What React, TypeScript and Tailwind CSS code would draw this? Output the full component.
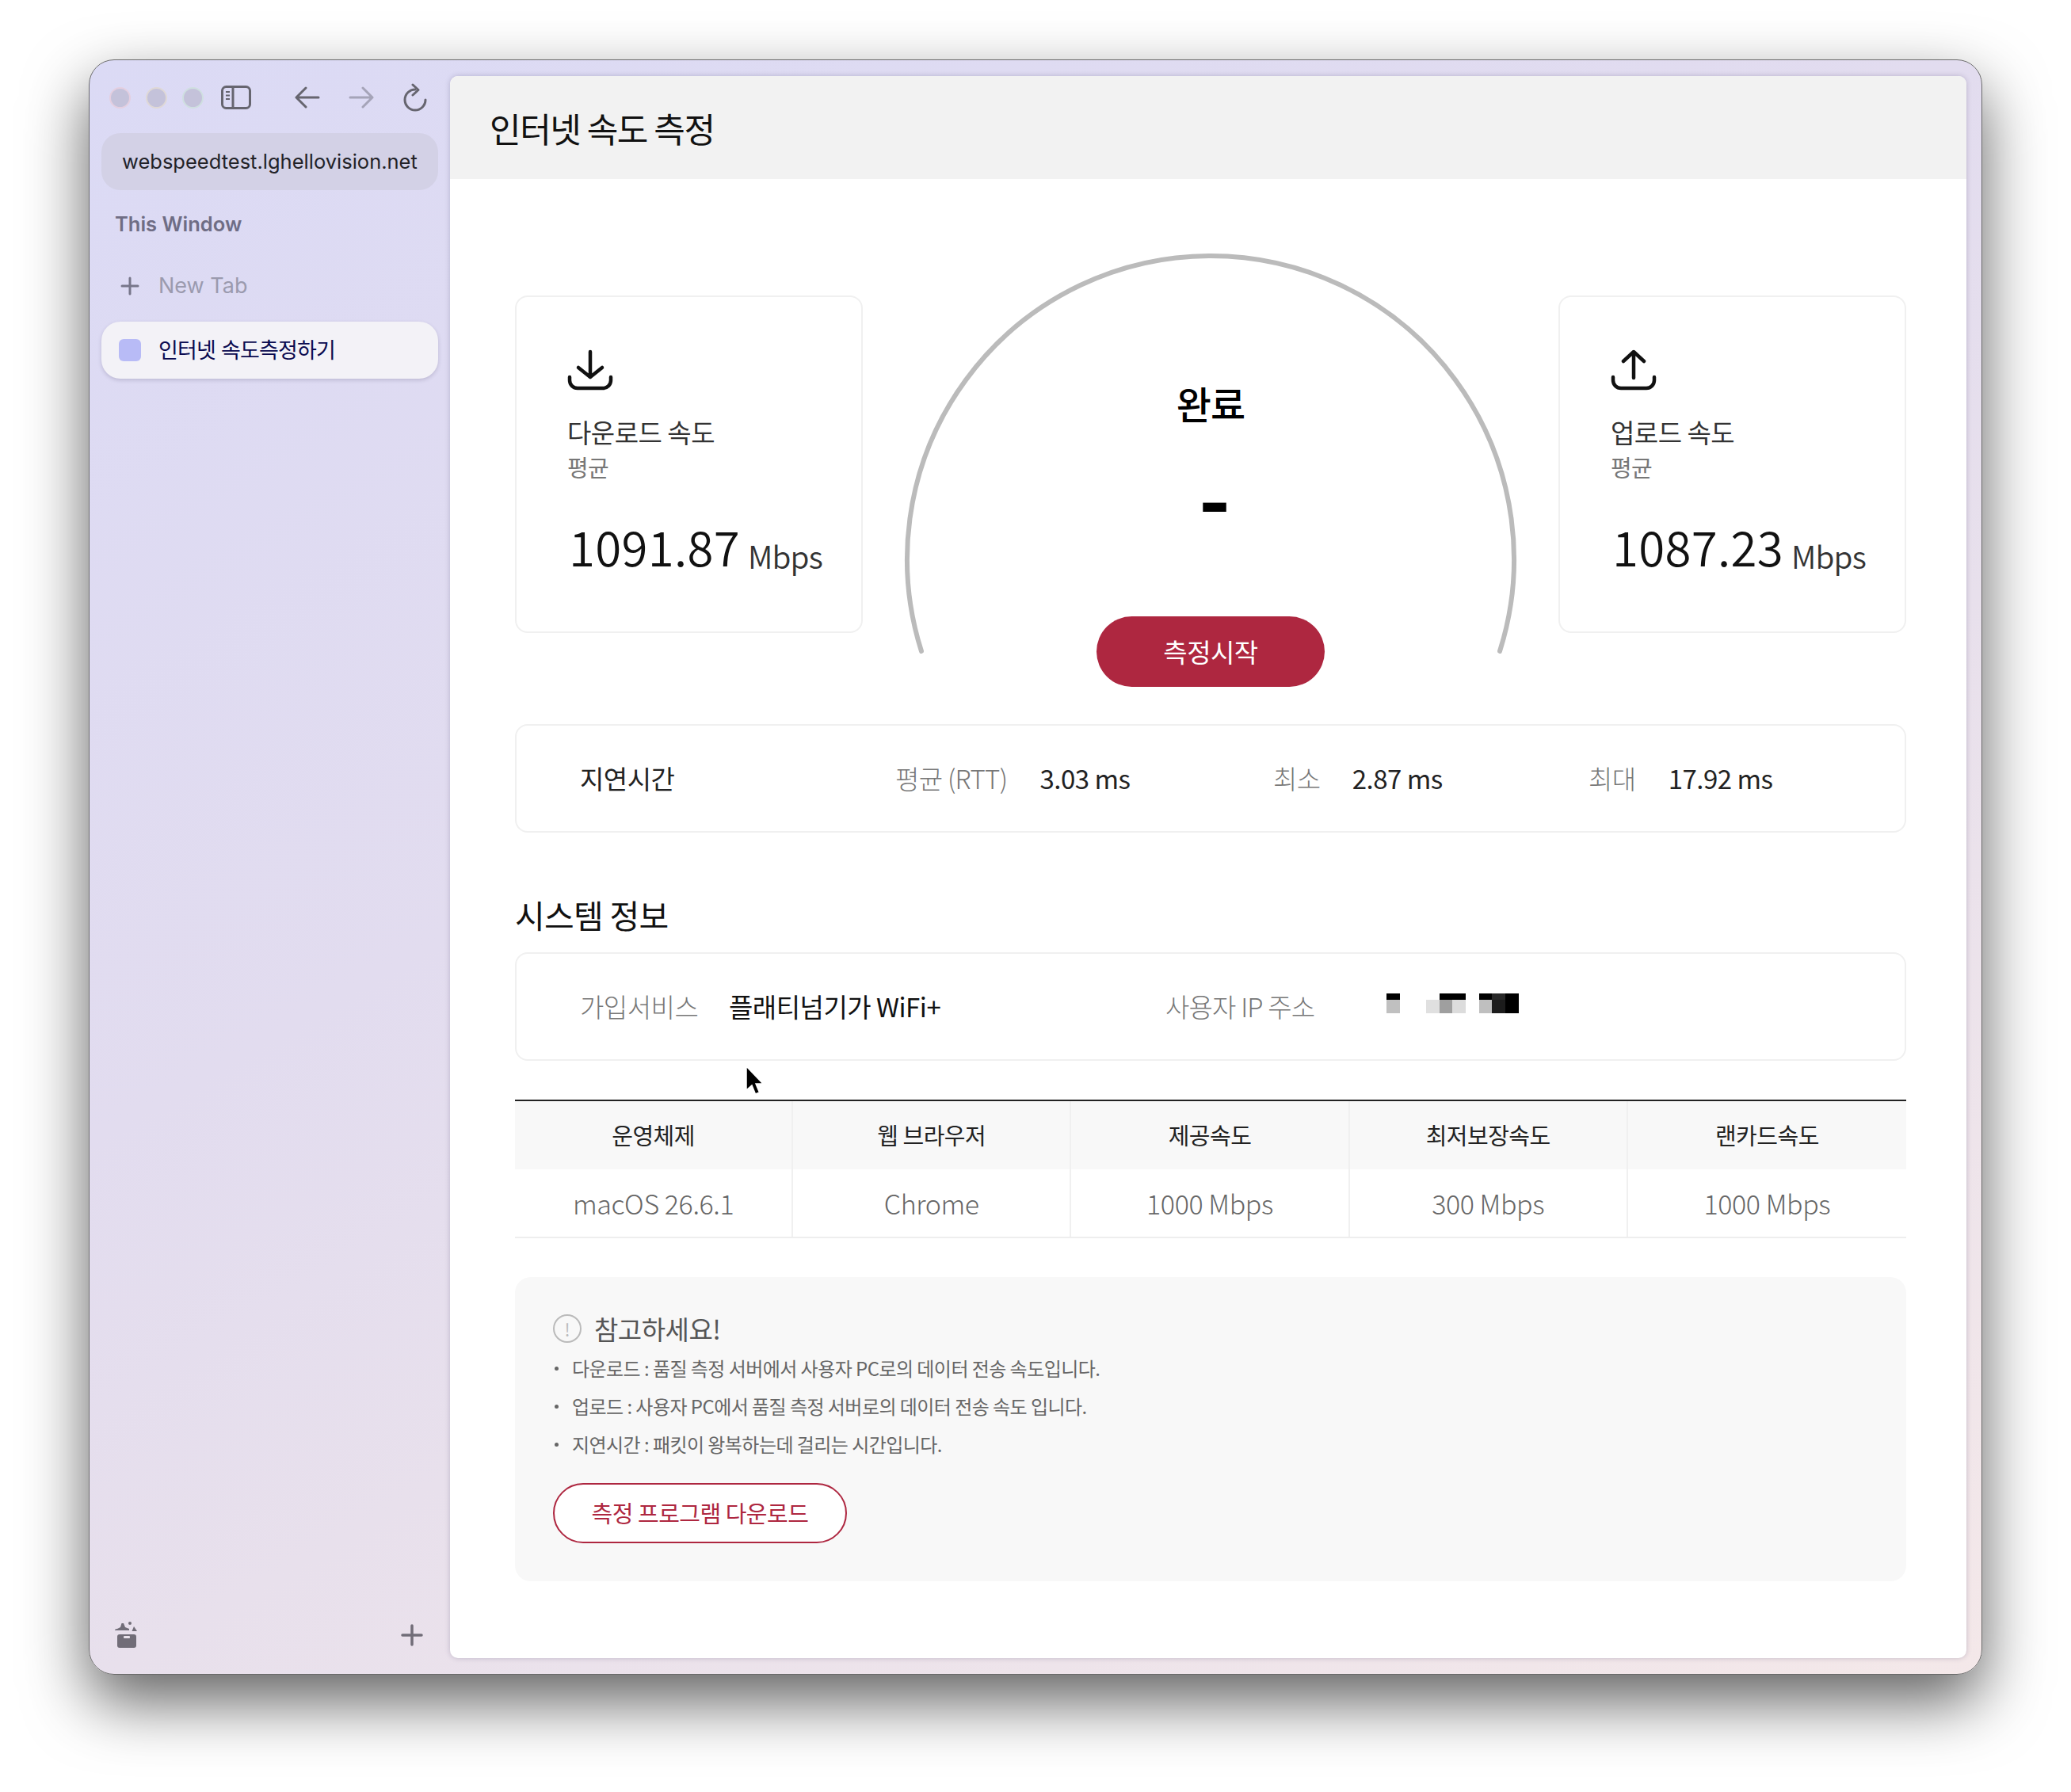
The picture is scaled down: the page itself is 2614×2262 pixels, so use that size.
const kr = "font-['Noto_Sans_CJK_KR',sans-serif]";

function DownloadIcon() {
  return (
    <svg width="58" height="54" viewBox="0 0 58 54" fill="none" stroke="#111" strokeWidth="4.5" strokeLinecap="round" strokeLinejoin="round">
      <path d="M29 3v32M14 23l15 12 15-12" />
      <path d="M3 35v4a10 10 0 0 0 10 10h32a10 10 0 0 0 10-10v-4" />
    </svg>
  );
}

function UploadIcon() {
  return (
    <svg width="58" height="54" viewBox="0 0 58 54" fill="none" stroke="#111" strokeWidth="4.5" strokeLinecap="round" strokeLinejoin="round">
      <path d="M29 36V4M16 15L29 3l13 12" />
      <path d="M3 35v4a10 10 0 0 0 10 10h32a10 10 0 0 0 10-10v-4" />
    </svg>
  );
}

function SpeedCard({ icon, title, value }: { icon: React.ReactNode; title: string; value: string }) {
  return (
    <div className="mt-[55px] h-[426px] w-[439px] rounded-[16px] border-2 border-[#f0f0f0] pl-[64px] pt-[66px]">
      <div className="h-[54px]">{icon}</div>
      <p className="mt-[27px] text-[33px] leading-[46px] tracking-[-0.5px] text-[#333]">{title}</p>
      <p className="mt-[3px] text-[29px] leading-[36px] tracking-[-0.8px] text-[#777]">평균</p>
      <p className="mt-[46px] flex items-end whitespace-nowrap pl-[2px]">
        <span className="text-[60px] font-[350] leading-[72px] tracking-[0.3px] text-[#111]">{value}</span>
        <span className="ml-[10px] text-[39px] font-[350] leading-[48px] tracking-[-0.8px] text-[#333]">Mbps</span>
      </p>
    </div>
  );
}

function Gauge() {
  return (
    <div className="relative flex h-[549px] w-[774px] flex-col items-center">
      <svg className="absolute inset-0" width="774" height="549" viewBox="0 0 774 549" fill="none">
        <path d="M22 504A383 383 0 1 1 752 504" stroke="#bbbbbb" strokeWidth="6" strokeLinecap="round" />
      </svg>
      <p className="mt-[158px] text-[48px] font-medium leading-[64px] tracking-[-1px] text-black">완료</p>
      <p className="ml-[10px] mt-[36px] h-[96px] text-[108px] font-bold leading-[96px] text-black">-</p>
      <button className="relative mt-[106px] flex h-[90px] w-[288px] items-center justify-center rounded-full bg-[#ae2740] text-[33px] tracking-[-0.5px] text-white">
        측정시작
      </button>
    </div>
  );
}

function LatencyRow() {
  return (
    <div className="mt-[47px] flex h-[137px] items-center rounded-[16px] border-2 border-[#f0f0f0] pl-[80px] text-[33px] tracking-[-0.5px]">
      <span className="w-[398px] text-[#222]">지연시간</span>
      <div className="flex w-[477px] gap-[41px]">
        <span className="font-light tracking-[-0.7px] text-[#777]">평균 (RTT)</span>
        <span className="text-[#222]">3.03 ms</span>
      </div>
      <div className="flex w-[398px] gap-[40px]">
        <span className="font-light text-[#777]">최소</span>
        <span className="text-[#222]">2.87 ms</span>
      </div>
      <div className="flex gap-[41px]">
        <span className="font-light text-[#777]">최대</span>
        <span className="text-[#222]">17.92 ms</span>
      </div>
    </div>
  );
}

function MaskedIp() {
  const cells: [number, number, string][] = [
    [0, 0, "#000"], [0, 8, "#c0c0c0"],
    [50, 8, "#e0e0e0"], [67, 0, "#000"], [67, 8, "#9f9f9f"], [83, 0, "#000"], [83, 8, "#dcdcdc"],
    [117, 0, "#000"], [117, 8, "#bfbfbf"], [133, 0, "#282828"], [133, 8, "#1c1c1c"], [150, 0, "#000"], [150, 8, "#000"],
  ];
  return (
    <svg className="absolute left-[1098px] top-[50px]" width="167" height="25" viewBox="0 0 167 25" shapeRendering="crispEdges">
      {cells.map(([x, y, c], i) => (
        <rect key={i} x={x} y={y} width="17" height={y === 0 ? 8 : 17} fill={c} />
      ))}
    </svg>
  );
}

function SystemInfo() {
  const cols = [
    ["운영체제", "macOS 26.6.1"],
    ["웹 브라우저", "Chrome"],
    ["제공속도", "1000 Mbps"],
    ["최저보장속도", "300 Mbps"],
    ["랜카드속도", "1000 Mbps"],
  ];
  return (
    <>
      <h2 className="mt-[75px] text-[41px] font-normal leading-[56px] tracking-[-0.7px] text-[#111]">시스템 정보</h2>
      <div className="relative mt-[20px] flex h-[137px] items-center rounded-[16px] border-2 border-[#f0f0f0] pl-[80px] text-[33px] font-light tracking-[-0.5px]">
        <span className="w-[188px] text-[#777]">가입서비스</span>
        <span className="w-[551px] font-normal text-[#111]">플래티넘기가 WiFi+</span>
        <span className="tracking-[-0.8px] text-[#777]">사용자 IP 주소</span>
        <MaskedIp />
      </div>
      <div className="relative mt-[49px] grid grid-cols-5 border-t-2 border-t-[#222] border-b-2 border-b-[#eeeeee]">
        {cols.map(([head, val], i) => (
          <div key={head} className={i < 4 ? "border-r-2 border-r-[#f0f0f0]" : ""}>
            <div className="flex h-[86px] items-center justify-center bg-[#f8f8f8] text-[29px] tracking-[-0.5px] text-[#222]">{head}</div>
            <div className="flex h-[85px] items-center justify-center text-[34px] font-light tracking-[-0.4px] text-[#666]">{val}</div>
          </div>
        ))}
        <svg className="absolute left-[288px] top-[-46px]" width="26" height="40" viewBox="0 0 26 40">
          <path d="M4 2v30l7-6 4.500 11 5-2-4.500-11h9z" fill="#000" stroke="#fff" strokeWidth="1.500" />
        </svg>
      </div>
    </>
  );
}

function NoteBox() {
  const notes = [
    "다운로드 : 품질 측정 서버에서 사용자 PC로의 데이터 전송 속도입니다.",
    "업로드 : 사용자 PC에서 품질 측정 서버로의 데이터 전송 속도 입니다.",
    "지연시간 : 패킷이 왕복하는데 걸리는 시간입니다.",
  ];
  return (
    <div className="mt-[49px] h-[384px] rounded-[20px] bg-[#f8f8f8] pl-[48px] pt-[43px]">
      <div className="flex h-[44px] items-center gap-[16px]">
        <span className="flex h-[36px] w-[36px] items-center justify-center rounded-full border-2 border-[#bbbbbb] text-[22px] leading-none text-[#bbbbbb]">!</span>
        <span className="text-[33px] leading-[44px] tracking-[-0.5px] text-[#555]">참고하세요!</span>
      </div>
      <ul className="mt-[4px]">
        {notes.map((n) => (
          <li key={n} className="flex h-[48px] items-center text-[24px] tracking-[-0.55px] text-[#666]">
            <span className="ml-[2px] mr-[17px] h-[5px] w-[5px] rounded-full bg-[#666]" />
            {n}
          </li>
        ))}
      </ul>
      <button className="mt-[25px] flex h-[76px] w-[371px] items-center justify-center rounded-full border-2 border-[#ae2740] bg-white text-[29px] tracking-[-0.5px] text-[#ae2740]">
        측정 프로그램 다운로드
      </button>
    </div>
  );
}

function Sidebar() {
  return (
    <aside className="flex w-[455px] shrink-0 flex-col px-[15px] font-['Inter','Noto_Sans_CJK_KR',sans-serif]">
      <div className="flex h-[92px] items-center pt-[2px] text-[#66656f]">
        <div className="ml-[10px] flex gap-[19px]">
          <span className="h-[27px] w-[27px] rounded-full border-2 border-[#e4cfe0] bg-[#c4c2da]" />
          <span className="h-[27px] w-[27px] rounded-full border-2 border-[#dfd8d6] bg-[#c4c2da]" />
          <span className="h-[27px] w-[27px] rounded-full border-2 border-[#cfdfe0] bg-[#c4c2da]" />
        </div>
        <svg className="ml-[22px]" width="38" height="30" viewBox="0 0 38 30" fill="none" stroke="currentColor" strokeWidth="3">
          <rect x="1.500" y="1.500" width="35" height="27" rx="5" />
          <path d="M15 2v26" />
          <path d="M6 8h5M6 12.500h5M6 17h5" strokeWidth="2" />
        </svg>
        <svg className="ml-[55px]" width="32" height="28" viewBox="0 0 32 28" fill="none" stroke="currentColor" strokeWidth="3" strokeLinecap="round" strokeLinejoin="round">
          <path d="M2 14h28M14 2L2 14l12 12" />
        </svg>
        <svg className="ml-[36px] text-[#a5a4b8]" width="32" height="28" viewBox="0 0 32 28" fill="none" stroke="currentColor" strokeWidth="3" strokeLinecap="round" strokeLinejoin="round">
          <path d="M2 14h28M18 2l12 12-12 12" />
        </svg>
        <svg className="ml-[37px]" width="30" height="36" viewBox="0 0 30 36" fill="none" stroke="currentColor" strokeWidth="3" strokeLinecap="round" strokeLinejoin="round">
          <path d="M15 8A13 13 0 1 0 28 21" />
          <path d="M12 2l7 6.500-7 6.500" />
        </svg>
      </div>
      <div className="flex h-[72px] items-center rounded-[24px] bg-[#d3d1e6] pl-[26px] text-[25.500px] text-[#222228]">
        webspeedtest.lghellovision.net
      </div>
      <p className="ml-[17px] mt-[25px] text-[25.500px] font-semibold leading-[36px] text-[#6f6d84]">This Window</p>
      <div className="mt-[36px] flex h-[48px] items-center pl-[24px] text-[27px] text-[#9b9aae]">
        <svg width="24" height="24" viewBox="0 0 24 24" stroke="#77768a" strokeWidth="3" strokeLinecap="round">
          <path d="M12 2v20M2 12h20" />
        </svg>
        <span className="ml-[24px]">New Tab</span>
      </div>
      <div className="mt-[21px] flex h-[72px] items-center rounded-[24px] bg-[#f3f2f7] pl-[22px] shadow-[0_2px_5px_rgba(60,50,90,0.2)]">
        <span className="h-[28px] w-[28px] rounded-[6px] bg-[#b8bbf6]" />
        <span className="ml-[22px] pt-[3px] text-[27px] tracking-[-0.8px] text-[#0a0a50]">인터넷 속도측정하기</span>
      </div>
      <div className="mt-auto flex items-center justify-between pb-[33px] pl-[17px] pr-[19px] text-[#716d78]">
        <svg width="28" height="33" viewBox="0 0 28 33" fill="currentColor">
          <rect x="3" y="16" width="24" height="17" rx="3" />
          <path d="M0 11Q0 9 3 9L7 7 8.500 2 11 2 13 7 18 9 18 11Z" />
          <circle cx="19" cy="2" r="2" />
          <path d="M24 6l4 6h-6.500z" />
          <rect x="11" y="18" width="8" height="3" rx="1" fill="#e9e2ec" />
        </svg>
        <svg width="28" height="28" viewBox="0 0 28 28" stroke="currentColor" strokeWidth="3.500" strokeLinecap="round">
          <path d="M14 2v24M2 14h24" />
        </svg>
      </div>
    </aside>
  );
}

export default function App() {
  return (
    <div className={`h-[2262px] w-[2614px] overflow-hidden bg-white pl-[112px] pt-[75px] ${kr}`}>
      <div className="flex h-[2039px] w-[2390px] rounded-[32px] border border-[#6a6a6a] bg-[linear-gradient(150deg,#dbdaf5_0%,#e2dcef_40%,#e8e0ec_60%,#f4e8e9_100%)] shadow-[0_34px_80px_rgba(0,0,0,0.62)]">
        <Sidebar />
        <main className="my-[20px] mr-[19px] flex flex-1 flex-col overflow-hidden rounded-[10px] bg-white shadow-[0_0_6px_rgba(60,50,90,0.25)]">
          <header className="flex h-[130px] shrink-0 items-center bg-[#f2f2f2] pl-[50px] text-[43px] tracking-[-1.4px] text-[#111]">
            인터넷 속도 측정
          </header>
          <div className="pl-[82px] pr-[76px] pt-[92px]">
            <div className="flex items-start justify-between">
              <SpeedCard icon={<DownloadIcon />} title="다운로드 속도" value="1091.87" />
              <Gauge />
              <SpeedCard icon={<UploadIcon />} title="업로드 속도" value="1087.23" />
            </div>
            <LatencyRow />
            <SystemInfo />
            <NoteBox />
          </div>
        </main>
      </div>
    </div>
  );
}
